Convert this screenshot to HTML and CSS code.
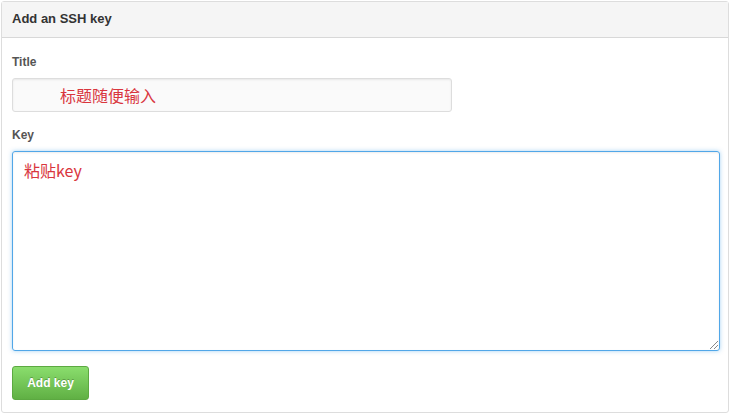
FILE: index.html
```html
<!DOCTYPE html>
<html lang="en">
<head>
    <meta charset="UTF-8">
    <title>Add an SSH key</title>
    <link rel="stylesheet" href="styles.css">
</head>
<body>
    <div class="box">
        <div class="box-header">Add an SSH key</div>
        <form class="box-body">
            <label class="field-label">Title</label>
            <div class="title-input">标题随便输入</div>
            <label class="field-label">Key</label>
            <div class="key-input">粘贴key<span class="grip"></span></div>
            <button type="button" class="btn">Add key</button>
        </form>
    </div>
</body>
</html>
```

FILE: styles.css
```css
body {
    margin: 1px;
    font-family: "Liberation Sans", Arial, "Noto Sans CJK SC", sans-serif;
    color: #333;
    background: #fff;
}
.box {
    width: 726px;
    border: 1px solid #ddd;
    border-radius: 3px;
}
.box-header {
    background-color: #f5f5f5;
    border-bottom: 1px solid #d8d8d8;
    padding: 0 10px;
    height: 35px;
    line-height: 34px;
    font-size: 13px;
    font-weight: bold;
}
.box-body {
    display: flex;
    flex-direction: column;
    align-items: flex-start;
    padding: 17px 10px 12px;
}
.field-label {
    font-size: 12px;
    font-weight: bold;
    color: #555;
    line-height: 14px;
    margin-bottom: 9px;
}
.title-input {
    box-sizing: border-box;
    width: 440px;
    height: 34px;
    border: 1px solid #ddd;
    border-radius: 3px;
    background: #fafafa;
    box-shadow: inset 0 1px 2px rgba(0,0,0,0.075);
    padding-left: 47px;
    line-height: 32px;
    font-size: 16px;
    color: #d9363e;
    margin-bottom: 16px;
    font-family: "Noto Sans CJK SC", sans-serif;
}
.key-input {
    position: relative;
    box-sizing: border-box;
    width: 708px;
    height: 200px;
    border: 1px solid #51a7e8;
    border-radius: 3px;
    box-shadow: inset 0 1px 2px rgba(0,0,0,0.075), 0 0 4px rgba(81,167,232,0.5);
    padding: 6px 11px;
    font-size: 16px;
    line-height: 24px;
    color: #d9363e;
    font-family: "Noto Sans CJK SC", sans-serif;
    margin-bottom: 15px;
}
.grip {
    position: absolute;
    right: 1px;
    bottom: 1px;
    width: 8px;
    height: 8px;
    background: linear-gradient(135deg, transparent 45%, #888 45%, #888 55%, transparent 55%, transparent 70%, #888 70%, #888 80%, transparent 80%);
}
.btn {
    height: 34px;
    width: 77px;
    padding: 0;
    border: 1px solid #5ca941;
    border-radius: 3px;
    background: linear-gradient(#8add6d, #60b044);
    color: #fff;
    font-family: "Liberation Sans", Arial, sans-serif;
    font-size: 12px;
    font-weight: bold;
    text-shadow: 0 -1px 0 rgba(0,0,0,0.25);
}
```
